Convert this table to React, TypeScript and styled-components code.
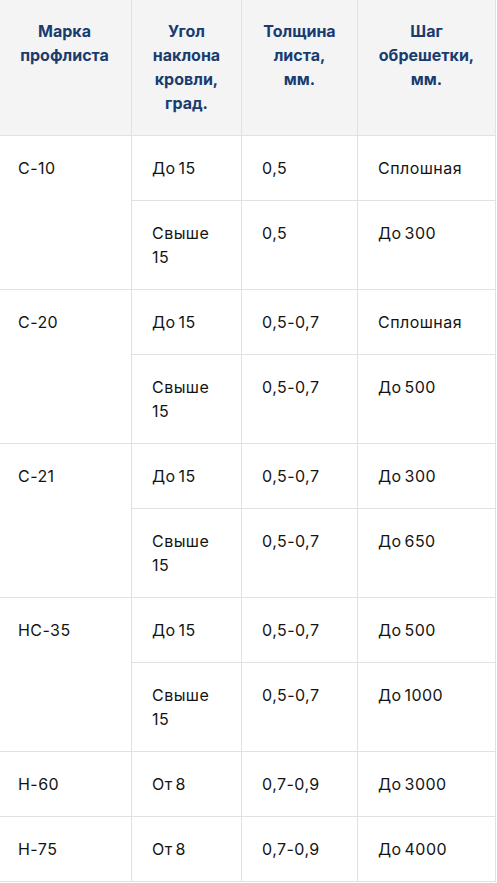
import React from "react";
import styled, { createGlobalStyle } from "styled-components";

const Global = createGlobalStyle`
  html, body { margin: 0; padding: 0; background: #ffffff; }
  body { font-family: Inter, "Noto Sans", sans-serif; }
`;

const Table = styled.table`
  border-collapse: separate;
  border-spacing: 0;
  table-layout: fixed;
  width: 496px;
  font-family: Inter, "Noto Sans", sans-serif;
`;

const Col = styled.col<{ $w: number }>`
  width: ${(p) => p.$w}px;
`;

const Th = styled.th<{ $first?: boolean }>`
  background: #f4f4f4;
  color: #183c70;
  font-weight: 700;
  font-size: 16px;
  line-height: 24px;
  text-align: center;
  vertical-align: top;
  padding: 19px 20px 20px ${(p) => (p.$first ? 18 : 20)}px;
  border-right: 1px solid #e1e1e1;
  border-bottom: 1px solid #e1e1e1;
`;

const Td = styled.td<{ $first?: boolean }>`
  color: #141414;
  font-size: 16px;
  line-height: 24px;
  font-weight: 400;
  text-align: left;
  vertical-align: top;
  padding: 20px 20px 20px ${(p) => (p.$first ? 18 : 20)}px;
  border-right: 1px solid #e1e1e1;
  border-bottom: 1px solid #e1e1e1;
  letter-spacing: 0.45px;
  word-spacing: -2px;
`;

type Sub = { angle: string; thick: string; step: string };
type Group = { mark: string; rows: Sub[] };

const data: Group[] = [
  {
    mark: "С-10",
    rows: [
      { angle: "До 15", thick: "0,5", step: "Сплошная" },
      { angle: "Свыше 15", thick: "0,5", step: "До 300" },
    ],
  },
  {
    mark: "С-20",
    rows: [
      { angle: "До 15", thick: "0,5-0,7", step: "Сплошная" },
      { angle: "Свыше 15", thick: "0,5-0,7", step: "До 500" },
    ],
  },
  {
    mark: "С-21",
    rows: [
      { angle: "До 15", thick: "0,5-0,7", step: "До 300" },
      { angle: "Свыше 15", thick: "0,5-0,7", step: "До 650" },
    ],
  },
  {
    mark: "НС-35",
    rows: [
      { angle: "До 15", thick: "0,5-0,7", step: "До 500" },
      { angle: "Свыше 15", thick: "0,5-0,7", step: "До 1000" },
    ],
  },
  { mark: "Н-60", rows: [{ angle: "От 8", thick: "0,7-0,9", step: "До 3000" }] },
  { mark: "Н-75", rows: [{ angle: "От 8", thick: "0,7-0,9", step: "До 4000" }] },
];

export default function App() {
  return (
    <>
      <Global />
      <Table>
        <colgroup>
          <Col $w={132} />
          <Col $w={110} />
          <Col $w={116} />
          <Col $w={138} />
        </colgroup>
        <thead>
          <tr>
            <Th $first>Марка профлиста</Th>
            <Th>Угол наклона кровли, град.</Th>
            <Th>Толщина листа, мм.</Th>
            <Th>Шаг обрешетки, мм.</Th>
          </tr>
        </thead>
        <tbody>
          {data.map((g) =>
            g.rows.map((r, i) => (
              <tr key={g.mark + i}>
                {i === 0 && (
                  <Td $first rowSpan={g.rows.length}>
                    {g.mark}
                  </Td>
                )}
                <Td>{r.angle}</Td>
                <Td>{r.thick}</Td>
                <Td>{r.step}</Td>
              </tr>
            ))
          )}
        </tbody>
      </Table>
    </>
  );
}
